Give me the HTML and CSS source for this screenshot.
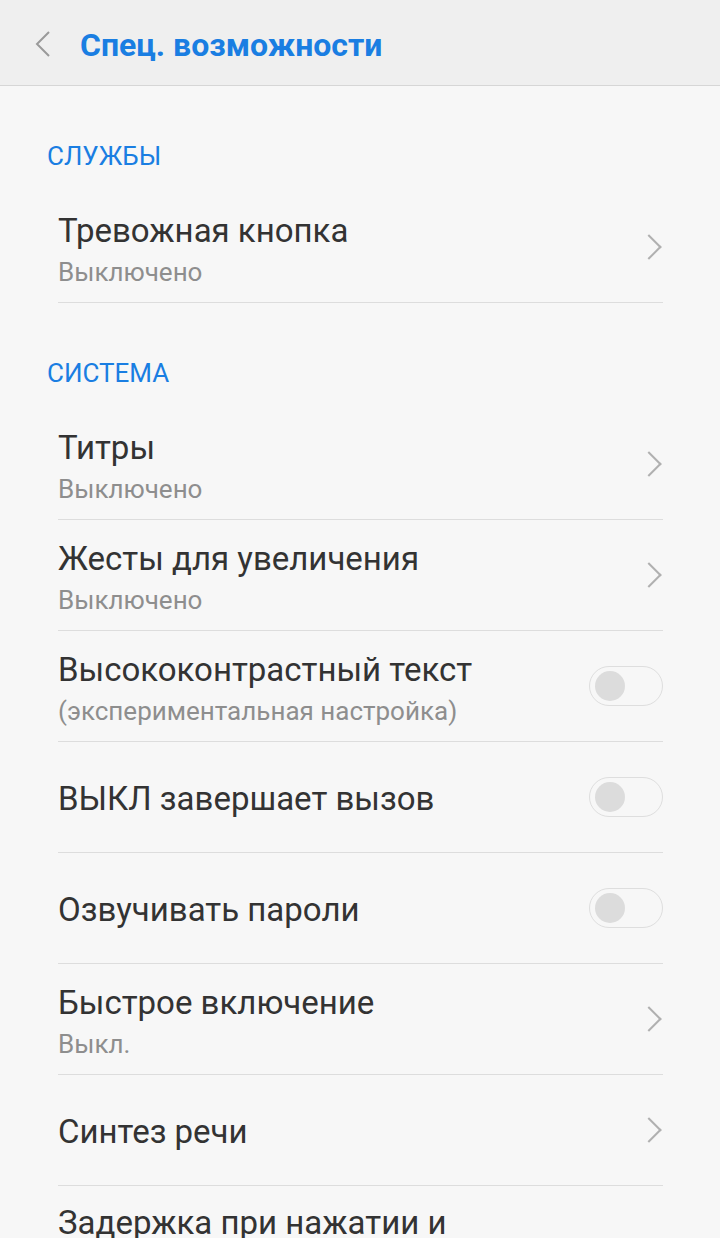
FILE: index.html
```html
<!DOCTYPE html>
<html lang="ru">
<head>
    <meta charset="UTF-8">
    <meta name="viewport" content="width=device-width, initial-scale=1.0">
    <title>Спец. возможности</title>
    <link rel="stylesheet" href="styles.css">
</head>
<body>
<div class="header">
    <svg class="back" width="16" height="26" viewBox="0 0 16 26">
        <path d="M14 1 L2 13 L14 25" fill="none" stroke="#9a9a9a" stroke-width="2"/>
    </svg>
    <h1>Спец. возможности</h1>
</div>

<div class="content">
    <div class="section-title">СЛУЖБЫ</div>
    <div class="row">
        <div class="text">
            <div class="name">Тревожная кнопка</div>
            <div class="sub">Выключено</div>
        </div>
        <span class="chevron"></span>
    </div>

    <div class="section-title">СИСТЕМА</div>
    <div class="row">
        <div class="text">
            <div class="name">Титры</div>
            <div class="sub">Выключено</div>
        </div>
        <span class="chevron"></span>
    </div>
    <div class="row">
        <div class="text">
            <div class="name">Жесты для увеличения</div>
            <div class="sub">Выключено</div>
        </div>
        <span class="chevron"></span>
    </div>
    <div class="row">
        <div class="text">
            <div class="name">Высококонтрастный текст</div>
            <div class="sub">(экспериментальная настройка)</div>
        </div>
        <span class="switch"></span>
    </div>
    <div class="row">
        <div class="text">
            <div class="name">ВЫКЛ завершает вызов</div>
        </div>
        <span class="switch"></span>
    </div>
    <div class="row">
        <div class="text">
            <div class="name">Озвучивать пароли</div>
        </div>
        <span class="switch"></span>
    </div>
    <div class="row">
        <div class="text">
            <div class="name">Быстрое включение</div>
            <div class="sub">Выкл.</div>
        </div>
        <span class="chevron"></span>
    </div>
    <div class="row">
        <div class="text">
            <div class="name">Синтез речи</div>
        </div>
        <span class="chevron"></span>
    </div>
    <div class="row">
        <div class="text">
            <div class="name">Задержка при нажатии и удержании</div>
            <div class="sub">Короткая</div>
        </div>
        <span class="chevron"></span>
    </div>
</div>
</body>
</html>
```

FILE: styles.css
```css
body {
    font-family: 'Roboto', 'Noto Sans', sans-serif;
    background-color: #f7f7f7;
    margin: 0;
    height: 1238px;
    overflow: hidden;
}

.header {
    height: 80px;
    padding-top: 5px;
    background-color: #efefef;
    border-bottom: 1px solid #d6d6d6;
    display: flex;
    align-items: center;
    padding-left: 35px;
}

.header .back {
    margin-right: 29px;
    margin-top: -2px;
}

.header h1 {
    margin: 0;
    font-size: 32px;
    font-weight: bold;
    color: #1a7ee2;
}

.section-title {
    padding: 55px 0 21px 47px;
    line-height: 30px;
    font-size: 26px;
    color: #1a7ee2;
}

.row {
    margin: 0 57px 0 58px;
    min-height: 110px;
    border-bottom: 1px solid #dddddd;
    display: flex;
    align-items: center;
    justify-content: space-between;
}

.text {
    max-width: 500px;
    padding: 17px 0 14px;
}

.name {
    font-size: 33px;
    line-height: 40px;
    color: #333333;
}

.sub {
    font-size: 26px;
    line-height: 30px;
    margin-top: 6px;
    color: #8e8e8e;
}

.chevron {
    width: 16px;
    height: 16px;
    border-top: 2px solid #b0b0b0;
    border-right: 2px solid #b0b0b0;
    transform: rotate(45deg);
    margin-right: 5px;
}

.switch {
    position: relative;
    width: 72px;
    height: 38px;
    border: 1px solid #dedede;
    border-radius: 20px;
}

.switch::after {
    content: "";
    position: absolute;
    left: 5px;
    top: 4px;
    width: 30px;
    height: 30px;
    border-radius: 50%;
    background-color: #dcdcdc;
}
```
